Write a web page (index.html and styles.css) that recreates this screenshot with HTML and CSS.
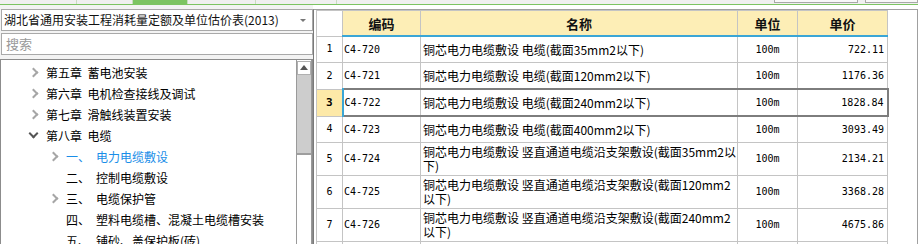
FILE: index.html
```html
<!DOCTYPE html>
<html lang="zh-CN">
<head>
  <meta charset="UTF-8">
  <title>定额库</title>
  <link rel="stylesheet" href="styles.css">
</head>
<body>
  <div class="tabs">
    <div class="tab" style="width:77px"></div>
    <div class="tab" style="width:56px"></div>
    <div class="tab active" style="width:55px"></div>
    <div class="tab" style="width:68px"></div>
    <div class="tab" style="width:81px"></div>
    <div class="tab-fill"></div>
    <div class="tab-btn" style="width:84px"></div>
    <div class="tab-btn last"></div>
  </div>
  <div class="rule"></div>

  <div class="main">
    <!-- left: library + chapter tree -->
    <div class="side">
      <div class="select">
        <span>湖北省通用安装工程消耗量定额及单位估价表(2013)</span>
        <i class="caret"></i>
      </div>
      <div class="search">搜索</div>
      <div class="tree">
        <ul class="tree-list">
          <li class="node"><span class="chev"></span>第五章&nbsp; 蓄电池安装</li>
          <li class="node"><span class="chev"></span>第六章&nbsp; 电机检查接线及调试</li>
          <li class="node"><span class="chev"></span>第七章&nbsp; 滑触线装置安装</li>
          <li class="node"><span class="chev open"></span>第八章&nbsp; 电缆</li>
          <li class="node sub current"><span class="chev"></span><b class="num">一、</b>电力电缆敷设</li>
          <li class="node sub"><span class="chev none"></span><b class="num">二、</b>控制电缆敷设</li>
          <li class="node sub"><span class="chev"></span><b class="num">三、</b>电缆保护管</li>
          <li class="node sub"><span class="chev none"></span><b class="num">四、</b>塑料电缆槽、混凝土电缆槽安装</li>
          <li class="node sub"><span class="chev none"></span><b class="num">五、</b>铺砂、盖保护板(砖)</li>
        </ul>
        <div class="scroll">
          <div class="scroll-up"></div>
          <div class="scroll-thumb"></div>
        </div>
      </div>
    </div>

    <!-- right: quota items -->
    <div class="grid-wrap">
      <table class="grid">
        <colgroup>
          <col style="width:26px">
          <col style="width:78px">
          <col style="width:317px">
          <col style="width:60px">
          <col style="width:90px">
        </colgroup>
        <thead>
          <tr>
            <th class="corner"></th>
            <th>编码</th>
            <th>名称</th>
            <th>单位</th>
            <th>单价</th>
          </tr>
        </thead>
        <tbody>
          <tr>
            <td class="idx">1</td><td class="code">C4-720</td>
            <td class="name">铜芯电力电缆敷设 电缆(截面35mm2以下)</td>
            <td class="unit">100m</td><td class="price">722.11</td>
          </tr>
          <tr>
            <td class="idx">2</td><td class="code">C4-721</td>
            <td class="name">铜芯电力电缆敷设 电缆(截面120mm2以下)</td>
            <td class="unit">100m</td><td class="price">1176.36</td>
          </tr>
          <tr class="selected">
            <td class="idx">3</td><td class="code">C4-722</td>
            <td class="name">铜芯电力电缆敷设 电缆(截面240mm2以下)</td>
            <td class="unit">100m</td><td class="price">1828.84</td>
          </tr>
          <tr>
            <td class="idx">4</td><td class="code">C4-723</td>
            <td class="name">铜芯电力电缆敷设 电缆(截面400mm2以下)</td>
            <td class="unit">100m</td><td class="price">3093.49</td>
          </tr>
          <tr class="tall">
            <td class="idx">5</td><td class="code">C4-724</td>
            <td class="name">铜芯电力电缆敷设 竖直通道电缆沿支架敷设(截面35mm2以<br>下)</td>
            <td class="unit">100m</td><td class="price">2134.21</td>
          </tr>
          <tr class="tall">
            <td class="idx">6</td><td class="code">C4-725</td>
            <td class="name">铜芯电力电缆敷设 竖直通道电缆沿支架敷设(截面120mm2<br>以下)</td>
            <td class="unit">100m</td><td class="price">3368.28</td>
          </tr>
          <tr class="tall">
            <td class="idx">7</td><td class="code">C4-726</td>
            <td class="name">铜芯电力电缆敷设 竖直通道电缆沿支架敷设(截面240mm2<br>以下)</td>
            <td class="unit">100m</td><td class="price">4675.86</td>
          </tr>
          <tr class="tall">
            <td class="idx">8</td><td class="code">C4-727</td>
            <td class="name">铜芯电力电缆敷设 竖直通道电缆沿支架敷设(截面400mm2<br>以下)</td>
            <td class="unit">100m</td><td class="price">6012.35</td>
          </tr>
        </tbody>
      </table>
    </div>
  </div>
</body>
</html>
```

FILE: styles.css
```css
:root {
  --line: #c4c4c4;
  --frame: #a0a0a0;
  --head: #fdeeb6;
  --blue: #3aa6d6;
  --link: #1a8ee8;
  --green: #7cc462;
  --panel: #f3f3f3;
}
html, body {
  margin: 0;
  padding: 0;
}
body {
  width: 918px;
  height: 244px;
  overflow: hidden;
  background: #fff;
  font-family: "Noto Sans CJK SC", sans-serif;
  font-size: 12px;
  color: #111;
}

/* top tab strip */
.tabs {
  display: flex;
  height: 4px;
  background: #f0f0f0;
}
.tab {
  box-sizing: border-box;
  border-right: 1px solid #c9dcc2;
}
.tab.active {
  background: var(--green);
}
.tab-fill {
  flex: 1;
}
.tab-btn {
  box-sizing: border-box;
  height: 3px;
  border: 1px solid #a8a8a8;
  border-top: none;
  margin-right: 7px;
  background: #f8f8f8;
}
.tab-btn.last {
  width: 53px;
  margin-right: 0;
}
.rule {
  height: 1px;
  background: var(--green);
}

.main {
  display: flex;
  height: 239px;
}

/* left panel */
.side {
  width: 313px;
  box-sizing: border-box;
  padding-top: 4px;
  background: var(--panel);
  display: flex;
  flex-direction: column;
  gap: 2px;
}
.select, .search {
  height: 22px;
  box-sizing: border-box;
  border: 1px solid #a9a9a9;
  background: #fff;
  margin-left: 1px;
  display: flex;
  align-items: center;
  padding: 0 3px 0 3px;
  line-height: 20px;
}
.select {
  justify-content: space-between;
  padding-left: 2px;
}
.caret {
  width: 0;
  height: 0;
  border-left: 3px solid transparent;
  border-right: 3px solid transparent;
  border-top: 3px solid #777;
  margin-right: 3px;
}
.search {
  color: #999;
  font-size: 13px;
  padding-left: 4px;
}
.tree {
  flex: 1;
  margin-top: 2px;
  border: 1px solid #8c8c8c;
  border-bottom: none;
  background: #fff;
  display: flex;
  overflow: hidden;
}
.tree-list {
  flex: 1;
  list-style: none;
  margin: 0;
  padding: 2px 0 0 0;
}
.node {
  height: 21px;
  line-height: 21px;
  display: flex;
  align-items: center;
  padding-left: 28px;
  white-space: nowrap;
  color: #000;
}
.node.sub {
  padding-left: 48px;
}
.node.current {
  color: var(--link);
}
.chev {
  width: 17px;
  height: 21px;
  position: relative;
  flex: none;
}
.chev::before {
  content: '';
  position: absolute;
  left: 1px;
  top: 7px;
  width: 5px;
  height: 5px;
  border-right: 2px solid #a6a6a6;
  border-bottom: 2px solid #a6a6a6;
  transform: rotate(-45deg);
}
.chev.open::before {
  left: 1px;
  top: 5px;
  border-color: #555;
  transform: rotate(45deg);
}
.chev.none::before {
  display: none;
}
.num {
  font-weight: normal;
  width: 30px;
  flex: none;
}
.scroll {
  width: 14px;
  border-left: 1px solid #9a9a9a;
  border-right: 1px solid #9a9a9a;
  background: #fff;
  flex: none;
}
.scroll-up {
  height: 14px;
  margin-top: 1px;
  box-sizing: border-box;
  border: 1px solid #b0b0b0;
  position: relative;
}
.scroll-up::after {
  content: '';
  position: absolute;
  left: 2px;
  top: 3px;
  border-left: 4px solid transparent;
  border-right: 4px solid transparent;
  border-bottom: 5px solid #555;
}
.scroll-thumb {
  height: 78px;
  background: #cdcdcd;
  border-bottom: 2px solid #9e9e9e;
}

/* right grid */
.grid-wrap {
  flex: 1;
  margin-top: 4px;
  border-top: 1px solid var(--frame);
  border-left: 1px solid #7a7a7a;
  border-right: 1px solid var(--frame);
  padding-left: 2px;
  overflow: hidden;
}
.grid {
  border-collapse: collapse;
  table-layout: fixed;
  width: 571px;
}
.grid th {
  height: 24px;
  padding: 0;
  background: var(--head);
  border: 1px solid var(--line);
  border-bottom: 2px solid var(--blue);
  font-weight: bold;
  font-size: 13px;
}
.grid th.corner {
  background: #fff;
  border-bottom: 1px solid var(--line);
}
.grid td {
  height: 25px;
  padding: 0 2px;
  border: 1px solid var(--line);
  line-height: 14px;
  color: #000;
}
.grid tr.tall td {
  height: 32px;
}
.grid td.name {
  white-space: nowrap;
  overflow: hidden;
}
.grid td.idx {
  text-align: center;
  padding: 0;
  font-family: "DejaVu Sans Mono", monospace;
  font-size: 10px;
}
.grid td.code, .grid td.unit, .grid td.price {
  font-family: "DejaVu Sans Mono", monospace;
  font-size: 10px;
}
.grid td.code {
  padding-left: 1px;
}
.grid td.unit {
  text-align: center;
}
.grid td.price {
  text-align: right;
  padding-right: 3px;
}
.grid tr.selected td {
  border-top: 2px solid #7d7d7d;
  border-bottom: 2px solid #7d7d7d;
}
.grid tr.selected td.idx {
  background: #fde9a8;
  font-weight: bold;
  font-size: 11px;
  border-top: 1px solid var(--line);
  border-bottom: 1px solid var(--line);
  border-right: 2px solid var(--blue);
}
.grid tr.selected td.price {
  border-right: 2px solid #7d7d7d;
}
```
